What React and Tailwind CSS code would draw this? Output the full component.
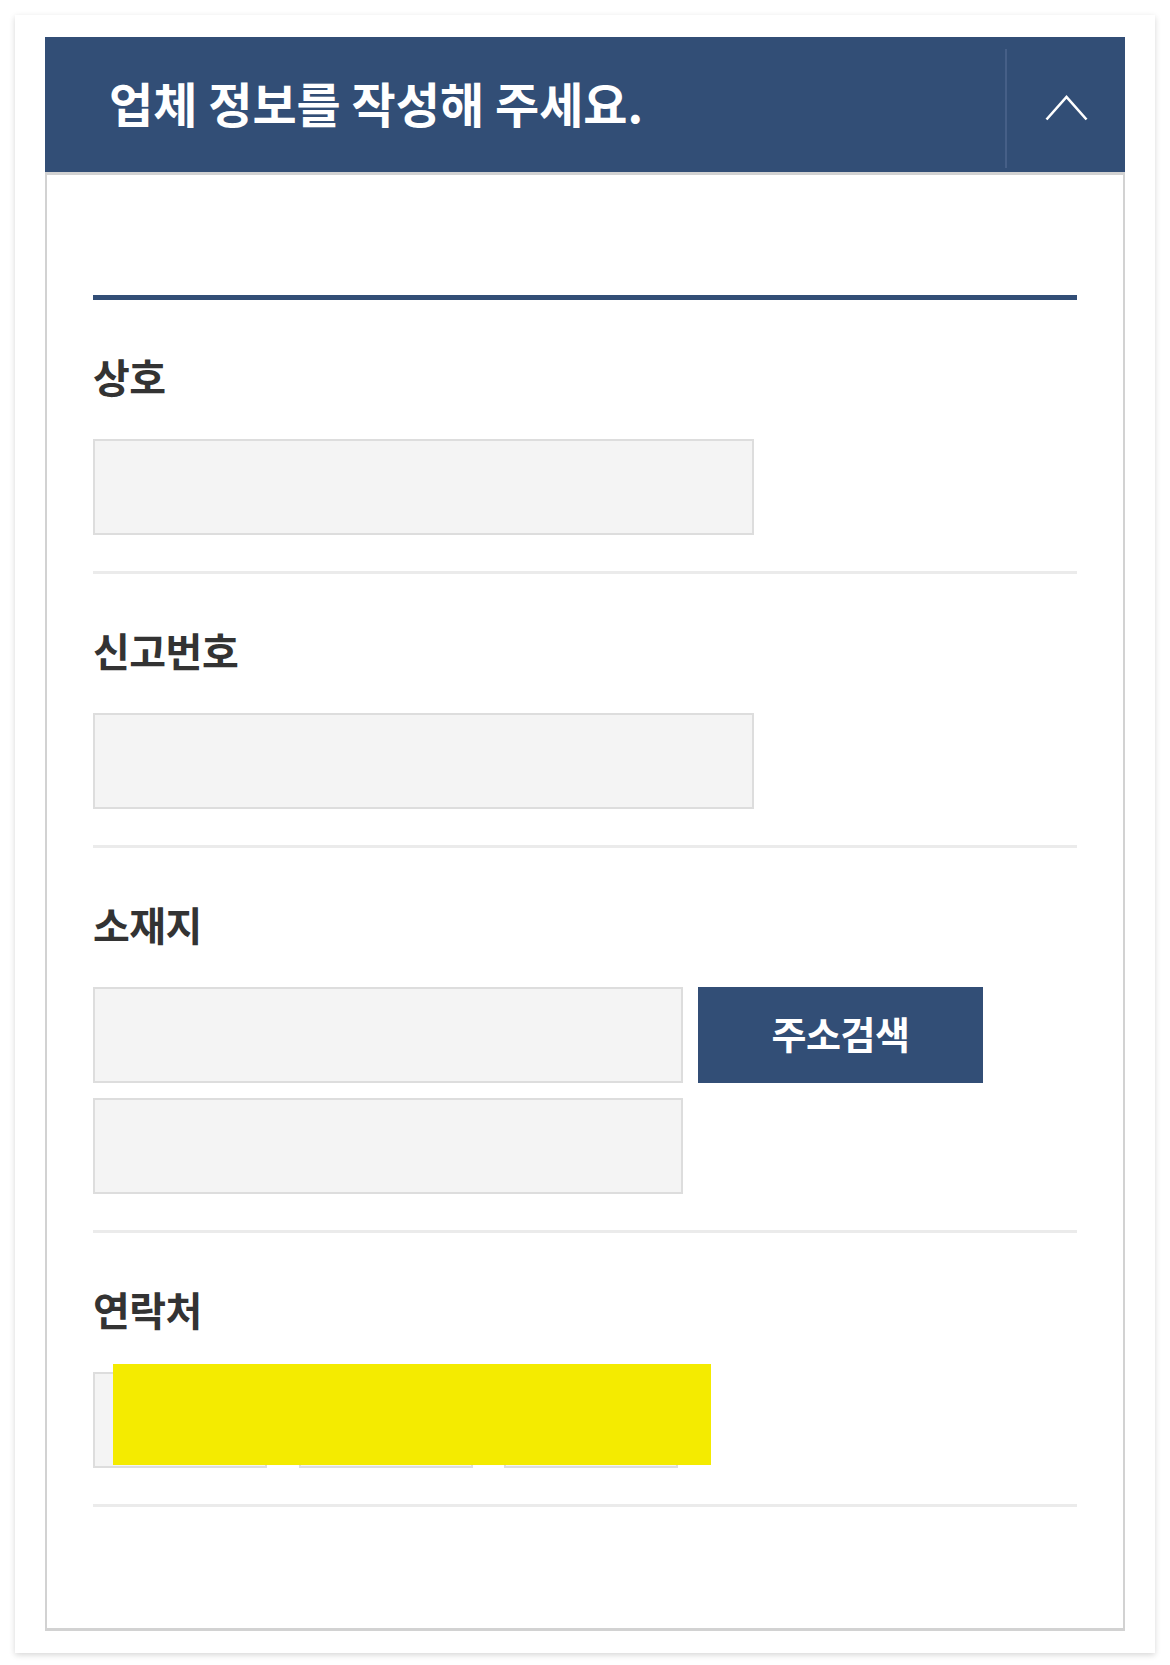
import React from 'react';

const KR = { fontFamily: '"Noto Sans CJK KR", "Noto Sans", sans-serif' };

function Field({ className = '' }) {
  return <div className={`h-[96px] border-2 border-[#dddddd] bg-[#f4f4f4] ${className}`} />;
}

function Section({ label, children }) {
  return (
    <div className="border-b-[3px] border-[#ebebeb] pt-[53px] pb-[36px]">
      <div className="text-[40px] leading-[46px] font-bold tracking-[-0.5px] text-[#333333]">{label}</div>
      <div className="mt-[40px]">{children}</div>
    </div>
  );
}

export default function App() {
  return (
    <div className="min-h-[1665px] bg-white pt-[15px] px-[15px]" style={KR}>
      <div className="w-[1140px] bg-white px-[30px] pt-[22px] pb-[22px] shadow-[0_2px_6px_rgba(0,0,0,0.16)]">
        {/* 헤더 */}
        <div className="flex h-[135px] items-stretch bg-[#324e76]">
          <div className="flex flex-1 items-center pl-[64px] pb-[6px] text-[48px] font-bold text-white">
            업체 정보를 작성해 주세요.
          </div>
          <div className="my-[12px] mb-[4px] w-[2px] bg-[#465f87]" />
          <button className="flex w-[118px] items-center justify-center pt-[6px]">
            <svg width="43" height="26" viewBox="0 0 43 26" fill="none">
              <polyline points="1.5,24.5 21.5,2 41.5,24.5" stroke="#ffffff" strokeWidth="2.6" />
            </svg>
          </button>
        </div>

        {/* 본문 */}
        <div className="border-x-2 border-y-[3px] border-[#d2d2d2] px-[46px] pt-[120px] pb-[121px]">
          <div className="border-t-[5px] border-[#324e76]">
            <Section label="상호">
              <Field className="w-[661px]" />
            </Section>
            <Section label="신고번호">
              <Field className="w-[661px]" />
            </Section>
            <Section label="소재지">
              <div className="flex gap-[15px]">
                <Field className="w-[590px]" />
                <button className="h-[96px] w-[285px] bg-[#324e76] pb-[6px] text-[38px] font-bold tracking-[-0.5px] text-white">
                  주소검색
                </button>
              </div>
              <Field className="mt-[15px] w-[590px]" />
            </Section>
            <Section label="연락처">
              <div className="relative flex items-center">
                <Field className="w-[174px]" />
                <span className="w-[32px] text-center text-[30px] text-[#333333]">-</span>
                <Field className="w-[174px]" />
                <span className="w-[31px] text-center text-[30px] text-[#333333]">-</span>
                <Field className="w-[174px]" />
                <div className="absolute left-[20px] top-[-8px] h-[101px] w-[598px] bg-[#f4eb00]" />
              </div>
            </Section>
          </div>
        </div>
      </div>
    </div>
  );
}
